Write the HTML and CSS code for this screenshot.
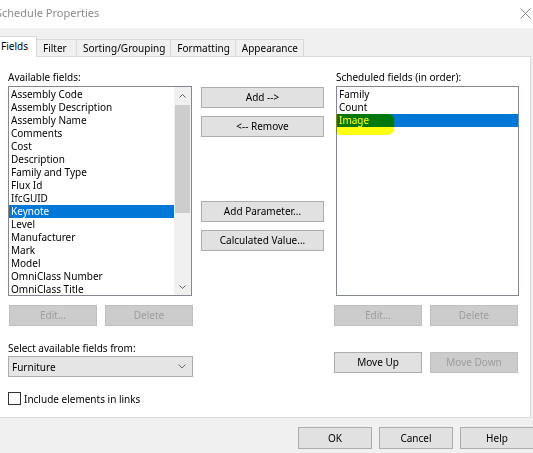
FILE: index.html
```html
<!DOCTYPE html>
<html>
<head>
<meta charset="utf-8">
<link rel="stylesheet" href="styles.css">
</head>
<body>
<div class="titlebar">
  <span class="title">Schedule Properties</span>
  <svg class="close" width="11" height="11" viewBox="0 0 11 11"><path d="M0.5 0.5 L10.5 10.5 M10.5 0.5 L0.5 10.5" stroke="#8a8a8a" stroke-width="1" fill="none"/></svg>
</div>
<div class="tabstrip">
  <div class="tab active">Fields</div>
  <div class="tab">Filter</div>
  <div class="tab">Sorting/Grouping</div>
  <div class="tab">Formatting</div>
  <div class="tab">Appearance</div>
</div>
<div class="panel">
  <div class="col col-left">
    <div class="label">Available fields:</div>
    <div class="listbox avail">
      <ul class="items">
        <li>Assembly Code</li>
        <li>Assembly Description</li>
        <li>Assembly Name</li>
        <li>Comments</li>
        <li>Cost</li>
        <li>Description</li>
        <li>Family and Type</li>
        <li>Flux Id</li>
        <li>IfcGUID</li>
        <li class="sel">Keynote</li>
        <li>Level</li>
        <li>Manufacturer</li>
        <li>Mark</li>
        <li>Model</li>
        <li>OmniClass Number</li>
        <li>OmniClass Title</li>
      </ul>
      <div class="scrollbar">
        <div class="arrow"><svg width="7" height="4" viewBox="0 0 7 4"><path d="M0.5 3.5 L3.5 0.5 L6.5 3.5" stroke="#606060" fill="none"/></svg></div>
        <div class="track"><div class="thumb"></div></div>
        <div class="arrow"><svg width="7" height="4" viewBox="0 0 7 4"><path d="M0.5 0.5 L3.5 3.5 L6.5 0.5" stroke="#606060" fill="none"/></svg></div>
      </div>
    </div>
    <div class="btnrow">
      <button class="btn small" disabled>Edit...</button>
      <button class="btn small" disabled>Delete</button>
    </div>
    <div class="label label-select">Select available fields from:</div>
    <div class="select">
      <span>Furniture</span>
      <svg width="8" height="5" viewBox="0 0 8 5"><path d="M0.5 0.5 L4 4 L7.5 0.5" stroke="#6a6a6a" fill="none"/></svg>
    </div>
    <label class="check"><span class="box"></span>Include elements in links</label>
  </div>
  <div class="col col-mid">
    <button class="btn wide">Add --&gt;</button>
    <button class="btn wide">&lt;-- Remove</button>
    <button class="btn wide gap-big">Add Parameter...</button>
    <button class="btn wide">Calculated Value...</button>
  </div>
  <div class="col col-right">
    <div class="label label-right">Scheduled fields (in order):</div>
    <div class="listbox sched">
      <ul class="items">
        <li>Family</li>
        <li>Count</li>
        <li class="sel">Image</li>
      </ul>
      <div class="marker"></div>
    </div>
    <div class="btnrow">
      <button class="btn small" disabled>Edit...</button>
      <button class="btn small" disabled>Delete</button>
    </div>
    <div class="btnrow moverow">
      <button class="btn small">Move Up</button>
      <button class="btn small" disabled>Move Down</button>
    </div>
  </div>
</div>
<div class="footer">
  <button class="btn dlg">OK</button>
  <button class="btn dlg">Cancel</button>
  <button class="btn dlg">Help</button>
</div>
</body>
</html>
```
FILE: styles.css
```css
* { box-sizing: border-box; }
html, body { margin: 0; padding: 0; }
body {
  width: 533px;
  height: 453px;
  overflow: hidden;
  background: #f0f0f0;
  font-family: "Noto Sans", "Open Sans", sans-serif;
  font-size: 10px;
  color: #000;
}
.titlebar {
  height: 28px;
  background: #fff;
  display: flex;
  align-items: flex-start;
}
.title {
  margin-left: -4px;
  padding-top: 5px;
  font-size: 11px;
  line-height: 15px;
  color: #8a8a8a;
}
.close {
  margin-left: auto;
  margin-right: 2px;
  margin-top: 8px;
}
.tabstrip {
  height: 28px;
  display: flex;
  align-items: flex-end;
  margin-left: -7px;
}
.tab {
  height: 17px;
  min-width: 41px;
  padding: 0 5px 0 6px;
  border: 1px solid #d9d9d9;
  border-bottom: none;
  background: #f0f0f0;
  line-height: 16px;
  margin-left: -1px;
  white-space: nowrap;
}
.tab.active {
  height: 21px;
  margin-bottom: -1px;
  padding: 1px 8px 0 8px;
  background: #fff;
  position: relative;
  z-index: 1;
}
.panel {
  margin-left: -1px;
  width: 532px;
  height: 362px;
  border: 1px solid #d9d9d9;
  background: #fff;
  display: flex;
  padding: 13px 0 0 8px;
}
.col { display: flex; flex-direction: column; }
.col-left { width: 185px; }
.col-mid { width: 124px; margin-left: 8px; padding-top: 17px; }
.col-right { width: 184px; margin-left: 9px; }
.label {
  height: 14px;
  line-height: 14px;
  white-space: nowrap;
}
.label-right { padding-left: 2px; }
.listbox {
  margin-top: 2px;
  height: 210px;
  border: 1px solid #828790;
  display: flex;
  background: #fff;
}
.avail { width: 184px; }
.sched { width: 183px; margin-left: 2px; position: relative; }
.items {
  list-style: none;
  margin: 0;
  padding: 1px 0 0 0;
  flex: 1;
  overflow: hidden;
}
.items li {
  height: 13px;
  line-height: 13px;
  padding-left: 2px;
  white-space: nowrap;
}
.items li.sel {
  background: #0078d7;
  color: #fff;
}
.marker {
  position: absolute;
  left: -1px;
  top: 27px;
  width: 58px;
  height: 21px;
  background: #ffff10;
  mix-blend-mode: multiply;
  border-radius: 1px 6px 8px 3px / 1px 6px 6px 5px;
}
.scrollbar {
  width: 17px;
  background: #f0f0f0;
  display: flex;
  flex-direction: column;
}
.arrow {
  height: 17px;
  display: flex;
  align-items: center;
  justify-content: center;
}
.track { flex: 1; }
.thumb {
  margin: 1px 1px 0 1px;
  height: 108px;
  background: #cdcdcd;
}
.btn {
  font-family: inherit;
  font-size: 10px;
  color: #000;
  background: #e1e1e1;
  border: 1px solid #adadad;
  padding: 0;
  margin: 0;
  height: 21px;
  line-height: 19px;
  text-align: center;
}
.btn[disabled] {
  background: #cccccc;
  border-color: #bfbfbf;
  color: #9c9c9c;
}
.btnrow {
  margin-top: 9px;
  display: flex;
  gap: 8px;
}
.col-left .btnrow { padding-left: 1px; }
.small { width: 88px; }
.moverow { margin-top: 26px; }
.wide { width: 123px; margin-top: 8px; }
.wide:first-child { margin-top: 0; }
.wide.gap-big { margin-top: 64px; }
.label-select { margin-top: 15px; }
.select {
  margin-top: 1px;
  height: 21px;
  width: 185px;
  border: 1px solid #acacac;
  background: #e5e5e5;
  display: flex;
  align-items: center;
  justify-content: space-between;
  padding: 0 6px 0 3px;
}
.check {
  margin-top: 15px;
  display: flex;
  align-items: center;
  height: 13px;
  white-space: nowrap;
}
.box {
  width: 13px;
  height: 13px;
  border: 1px solid #333;
  background: #fff;
  margin-right: 3px;
}
.footer {
  height: 35px;
  display: flex;
  padding: 9px 0 0 298px;
  gap: 7px;
}
.dlg {
  width: 74px;
  height: 22px;
  line-height: 20px;
  flex: none;
}
```
